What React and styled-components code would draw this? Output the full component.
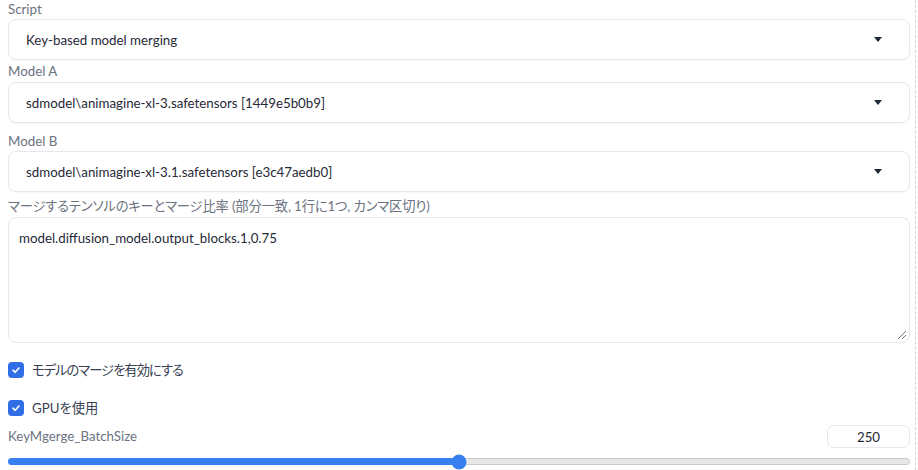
import styled, { createGlobalStyle } from "styled-components";

const Global = createGlobalStyle`
  body {
    margin: 0;
    background: #ffffff;
    font-family: Lato, "Noto Sans CJK JP", sans-serif;
    font-feature-settings: "palt";
  }
`;

const Page = styled.div`
  width: 916px;
  padding: 0 0 0 8px;
  border-right: 1px dashed #d4d4d8;
  height: 470px;
  box-sizing: border-box;
  overflow: hidden;
`;

const Column = styled.div`
  width: 902px;
  display: flex;
  flex-direction: column;
`;

const Field = styled.div`
  display: flex;
  flex-direction: column;
  margin-top: ${(p) => p.$top || 0}px;
`;

const Label = styled.span`
  font-size: 13.3px;
  line-height: 18px;
  color: #6b7280;
  letter-spacing: ${(p) => p.$spacing || 0}px;
  margin-bottom: ${(p) => p.$gap || 1}px;
`;

const Select = styled.div`
  height: 41px;
  box-sizing: border-box;
  border: 1px solid #e5e7eb;
  border-radius: 8px;
  box-shadow: 0 1px 2px rgba(0, 0, 0, 0.04);
  display: flex;
  align-items: center;
  justify-content: space-between;
  padding: 0 27px 0 17px;
  font-size: 13.3px;
  color: #1f2937;
`;

const Caret = styled.span`
  width: 0;
  height: 0;
  border-left: 4.5px solid transparent;
  border-right: 4.5px solid transparent;
  border-top: 5px solid #1f2937;
`;

const TextArea = styled.div`
  position: relative;
  height: 126px;
  box-sizing: border-box;
  border: 1px solid #e5e7eb;
  border-radius: 8px;
  padding: 12px 10px;
  font-size: 13.3px;
  color: #1f2937;
`;

const Grip = styled.svg`
  position: absolute;
  right: 2px;
  bottom: 2px;
`;

const CheckRow = styled.label`
  display: flex;
  align-items: center;
  gap: 8px;
  font-size: 13.3px;
  color: #374151;
  letter-spacing: ${(p) => p.$spacing || 0}px;
  margin-top: ${(p) => p.$top}px;
`;

const Box = styled.span`
  width: 16px;
  height: 16px;
  border-radius: 4px;
  background: #2f6ee6;
  display: flex;
  align-items: center;
  justify-content: center;
`;

const SliderHead = styled.div`
  display: flex;
  align-items: center;
  justify-content: space-between;
  margin-top: 8px;
`;

const NumberBox = styled.div`
  width: 83px;
  height: 23px;
  box-sizing: border-box;
  border: 1px solid #e5e7eb;
  border-radius: 7px;
  font-size: 13.3px;
  color: #1f2937;
  display: flex;
  align-items: center;
  justify-content: center;
`;

const Track = styled.div`
  position: relative;
  height: 7px;
  margin-top: 10px;
  border-radius: 4px;
  background: #e8e8e8;
  border: 1px solid #c9c9c9;
  box-sizing: border-box;
`;

const Fill = styled.div`
  border-radius: 4px;
  background: #3880f2;
  margin: -1px 0 0 -1px;
  height: 7px;
`;

const Thumb = styled.span`
  position: absolute;
  top: 50%;
  width: 15px;
  height: 15px;
  border-radius: 50%;
  background: #3880f2;
  transform: translate(-50%, -50%);
`;

const Tick = () => (
  <svg width="10" height="10" viewBox="0 0 10 10">
    <path d="M2 5.2 L4.2 7.3 L8 3" fill="none" stroke="#fff" strokeWidth="1.6" strokeLinecap="round" strokeLinejoin="round" />
  </svg>
);

function Dropdown({ value }) {
  return (
    <Select>
      <span>{value}</span>
      <Caret />
    </Select>
  );
}

export default function App() {
  const pct = 50;
  return (
    <>
      <Global />
      <Page>
        <Column>
          <Field>
            <Label>Script</Label>
            <Dropdown value="Key-based model merging" />
          </Field>
          <Field $top={2}>
            <Label $gap={2}>Model A</Label>
            <Dropdown value="sdmodel\animagine-xl-3.safetensors [1449e5b0b9]" />
          </Field>
          <Field $top={9}>
            <Label $gap={1}>Model B</Label>
            <Dropdown value="sdmodel\animagine-xl-3.1.safetensors [e3c47aedb0]" />
          </Field>
          <Field $top={5}>
            <Label $gap={2} $spacing={-0.15}>マージするテンソルのキーとマージ比率 (部分一致, 1行に1つ, カンマ区切り)</Label>
            <TextArea>
              model.diffusion_model.output_blocks.1,0.75
              <Grip width="12" height="12" viewBox="0 0 12 12">
                <path d="M11 3 L3 11 M11 7 L7 11" stroke="#777" strokeWidth="1" />
              </Grip>
            </TextArea>
          </Field>
          <CheckRow $top={17} $spacing={-1}>
            <Box><Tick /></Box>
            モデルのマージを有効にする
          </CheckRow>
          <CheckRow $top={19}>
            <Box><Tick /></Box>
            GPUを使用
          </CheckRow>
          <SliderHead>
            <Label>KeyMgerge_BatchSize</Label>
            <NumberBox>250</NumberBox>
          </SliderHead>
          <Track>
            <Fill style={{ width: `${pct}%` }} />
            <Thumb style={{ left: `${pct}%` }} />
          </Track>
        </Column>
      </Page>
    </>
  );
}
